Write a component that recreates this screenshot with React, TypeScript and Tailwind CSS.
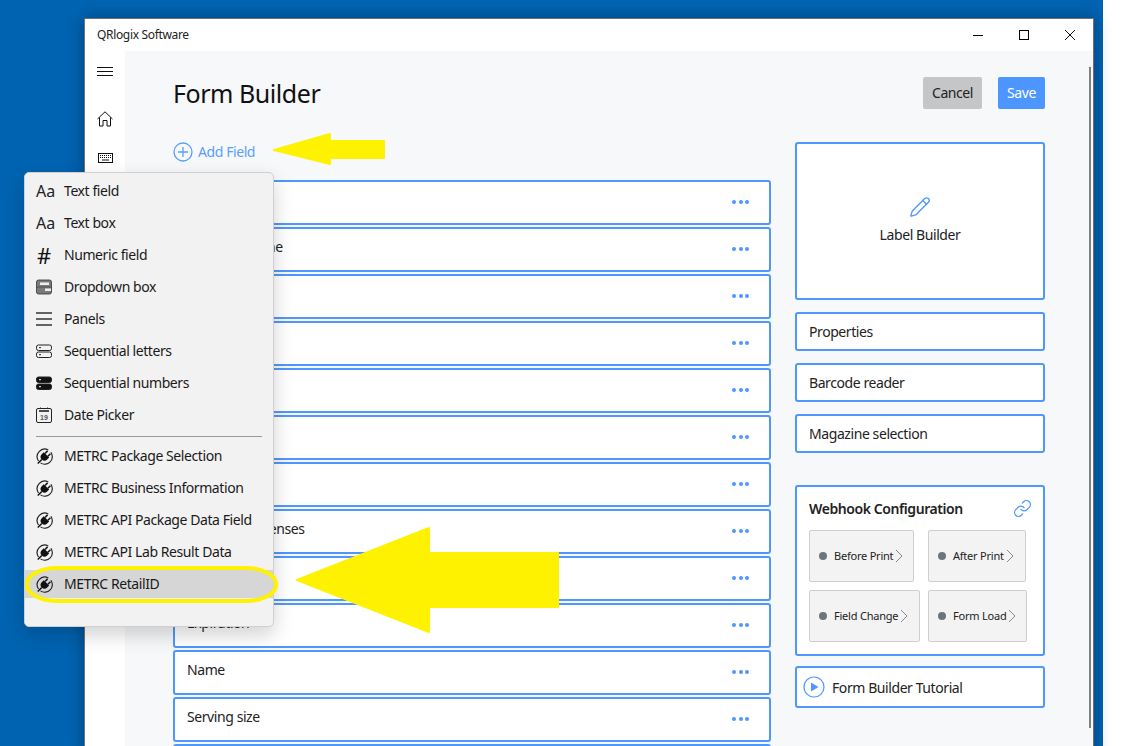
import { Link, Pencil } from 'lucide-react';

const font = 'font-["Noto_Sans","Open_Sans",sans-serif]';

// rows hidden behind the menu or below the fold keep an empty label
const fields = [
  '',
  'Business Name',
  '',
  '',
  '',
  '',
  '',
  "Producer's licenses",
  '',
  'Expiration',
  'Name',
  'Serving size',
  '',
];

function PlugIcon() {
  return (
    <svg width="17" height="17" viewBox="0 0 16 16" fill="none">
      <path d="M2.4 12.2A7.1 7.1 0 0 1 11.6 1.9" stroke="#222" strokeWidth="1.1" />
      <path d="M14 4A7.1 7.1 0 0 1 4.2 14" stroke="#222" strokeWidth="1.1" />
      <g transform="translate(8 8.3) rotate(45)">
        <path d="M-3.6 -2.6H3.6V0.4C3.6 2.4 2 3.6 0 3.6S-3.6 2.4 -3.6 0.4Z" fill="#111" />
        <path d="M-1.9 -2.6V-6M1.9 -2.6V-6M0 3.6V9" stroke="#111" strokeWidth="1.4" />
      </g>
    </svg>
  );
}

function DropdownIcon() {
  return (
    <svg width="16" height="16" viewBox="0 0 16 16">
      <rect x="0.5" y="1" width="15" height="14" rx="2" fill="#7a7a7a" stroke="#333" strokeWidth="0.8" />
      <rect x="4" y="3.5" width="9" height="2.5" fill="#eee" />
      <rect x="9" y="9.5" width="6" height="2.5" fill="#eee" />
      <path d="M0.5 8H15.5" stroke="#333" strokeWidth="0.6" />
    </svg>
  );
}

function PanelsIcon() {
  return (
    <svg width="16" height="16" viewBox="0 0 16 16" stroke="#333" strokeWidth="1.4">
      <path d="M0 2H16M0 8H16M0 14H16" />
    </svg>
  );
}

function LettersIcon({ solid }: { solid?: boolean }) {
  return (
    <svg width="16" height="16" viewBox="0 0 16 16">
      <rect x="0.5" y="2" width="15" height="5.5" rx="2" fill={solid ? '#111' : 'none'} stroke="#222" />
      <rect x="0.5" y="9" width="15" height="5.5" rx="2" fill={solid ? '#111' : 'none'} stroke="#222" />
      <path d="M3 4.7H5M3 11.7H5" stroke={solid ? '#fff' : '#222'} />
    </svg>
  );
}

function CalendarIcon() {
  return (
    <svg width="16" height="16" viewBox="0 0 16 16" fill="none">
      <rect x="0.5" y="1.5" width="15" height="14" rx="1.5" stroke="#222" />
      <path d="M3 4H13" stroke="#222" strokeWidth="1.6" />
      <path d="M4.5 0.5V2M11.5 0.5V2" stroke="#222" />
      <text x="8" y="13" textAnchor="middle" fontSize="7" fontWeight="700" fill="#555" fontFamily="Liberation Sans, sans-serif">
        19
      </text>
    </svg>
  );
}

function Glyph({ children }: { children: string }) {
  return <span className="text-[16px] leading-none text-[#222]">{children}</span>;
}

function MenuItem({
  icon,
  label,
  active,
}: {
  icon: React.ReactNode;
  label: string;
  active?: boolean;
}) {
  return (
    <div className={`flex h-[28px] items-center ${active ? 'bg-[#d6d6d6]' : ''}`}>
      <span className="flex w-[39px] shrink-0 justify-start pl-[11px]">{icon}</span>
      <span className="text-[14px] leading-none tracking-[-0.42px] text-[#1a1a1a]">{label}</span>
    </div>
  );
}

function FieldMenu() {
  return (
    <div className="absolute left-[24px] top-[172px] flex h-[455px] w-[250px] flex-col gap-[4px] rounded-[5px] border border-[#d0d0d0] bg-[#f2f2f2] pt-[4px] shadow-[0_8px_20px_rgba(0,0,0,0.18)]">
      <MenuItem icon={<Glyph>Aa</Glyph>} label="Text field" />
      <MenuItem icon={<Glyph>Aa</Glyph>} label="Text box" />
      <MenuItem icon={<span className="pl-[1px] text-[22px] leading-none text-[#111]">#</span>} label="Numeric field" />
      <MenuItem icon={<DropdownIcon />} label="Dropdown box" />
      <MenuItem icon={<PanelsIcon />} label="Panels" />
      <MenuItem icon={<LettersIcon />} label="Sequential letters" />
      <MenuItem icon={<LettersIcon solid />} label="Sequential numbers" />
      <MenuItem icon={<CalendarIcon />} label="Date Picker" />
      <div className="mx-[11px] mb-[1px] mt-[3px] h-px bg-[#999]" />
      <MenuItem icon={<PlugIcon />} label="METRC Package Selection" />
      <MenuItem icon={<PlugIcon />} label="METRC Business Information" />
      <MenuItem icon={<PlugIcon />} label="METRC API Package Data Field" />
      <MenuItem icon={<PlugIcon />} label="METRC API Lab Result Data" />
      <MenuItem icon={<PlugIcon />} label="METRC RetailID" active />
    </div>
  );
}

function FieldRow({ label }: { label: string }) {
  return (
    <div className="flex h-[45px] shrink-0 items-center justify-between rounded-[3px] border-2 border-[#4f97ff] bg-white pl-[12px] pr-[20px]">
      <span className="-mt-[6px] text-[14px] tracking-[-0.42px] text-[#222]">{label}</span>
      <span className="-mt-[2px] flex gap-[2.5px]">
        <i className="h-[4px] w-[4px] rounded-full bg-[#4f97ff]" />
        <i className="h-[4px] w-[4px] rounded-full bg-[#4f97ff]" />
        <i className="h-[4px] w-[4px] rounded-full bg-[#4f97ff]" />
      </span>
    </div>
  );
}

function SideCard({ label }: { label: string }) {
  return (
    <div className="flex h-[39px] items-center rounded-[3px] border-2 border-[#4f97ff] bg-white pl-[12px] text-[14px] tracking-[-0.42px] text-[#222]">
      {label}
    </div>
  );
}

function HookButton({ label, width }: { label: string; width: string }) {
  return (
    <div className={`flex h-[52px] items-center rounded-[2px] border border-[#cfcfcf] bg-[#f3f3f3] pl-[9px] ${width}`}>
      <i className="h-[8px] w-[8px] shrink-0 rounded-full bg-[#6c757d]" />
      <span className="ml-[7px] whitespace-nowrap text-[11px] tracking-[-0.22px] text-[#222]">{label}</span>
      <svg className="ml-[2px] shrink-0" width="8" height="14" viewBox="0 0 8 14" fill="none" stroke="#888">
        <path d="M1 1 7 7 1 13" />
      </svg>
    </div>
  );
}

export default function App() {
  return (
    <div className={`relative h-[746px] w-[1136px] overflow-hidden bg-white ${font}`}>
      <div className="h-full w-[1103px] bg-[#0063b1]" />

      <div className="absolute left-[84px] top-[18px] flex h-[740px] w-[1010px] flex-col border border-[#707070] bg-white shadow-[0_0_16px_rgba(0,0,0,0.32)]">
        <div className="flex h-[32px] shrink-0 items-center justify-between">
          <span className="pl-[12px] text-[12px] tracking-[-0.33px] text-[#222]">QRlogix Software</span>
          <div className="flex items-center">
            <span className="flex w-[46px] justify-center">
              <i className="h-px w-[10px] bg-black" />
            </span>
            <span className="flex w-[46px] justify-center">
              <i className="h-[10px] w-[10px] border border-black" />
            </span>
            <span className="flex w-[46px] justify-center">
              <svg width="10" height="10" viewBox="0 0 10 10" stroke="#111">
                <path d="M0 0 10 10M10 0 0 10" />
              </svg>
            </span>
          </div>
        </div>

        <div className="flex min-h-0 flex-1">
          <div className="flex w-[40px] shrink-0 flex-col items-center pt-[16px]">
            <svg width="16" height="9" viewBox="0 0 16 9" stroke="#111">
              <path d="M0 .5H16M0 4.5H16M0 8.5H16" />
            </svg>
            <svg className="mt-[35px]" width="16" height="16" viewBox="0 0 16 16" fill="none" stroke="#111">
              <path d="M.5 8 8 .8 15.5 8M2.5 6.5V15H6V9.5H10V15H13.5V6.5" />
            </svg>
            <svg className="mt-[26px]" width="15" height="10" viewBox="0 0 15 10" fill="none" stroke="#111">
              <rect x=".5" y=".5" width="14" height="9" />
              <path d="M2 2.5H13M2 4.5H13" strokeDasharray="1 1" />
              <path d="M4 7H11" />
            </svg>
          </div>

          <div className="relative min-w-0 flex-1 bg-[#f6f8fa] pl-[48px]">
            <div className="flex h-[91px] w-[872px] items-start justify-between">
              <h1 className="pt-[23px] text-[25px] font-normal leading-[38px] tracking-[-0.45px] text-[#111]">Form Builder</h1>
              <div className="flex gap-[16px] pt-[26px]">
                <span className="flex h-[32px] w-[59px] items-center justify-center rounded-[2px] bg-[#c5c6c8] pb-[1px] text-[14px] tracking-[-0.42px] text-[#222]">
                  Cancel
                </span>
                <span className="flex h-[32px] w-[47px] items-center justify-center rounded-[2px] bg-[#4d96ff] pb-[1px] text-[14px] tracking-[-0.42px] text-white">
                  Save
                </span>
              </div>
            </div>

            <div className="flex gap-[24px]">
              <div className="flex w-[598px] shrink-0 flex-col gap-[2px]">
                <div className="flex h-[36px] items-start gap-[5px] text-[14px] tracking-[-0.42px] text-[#5a9fff]">
                  <svg width="20" height="20" viewBox="0 0 20 20" fill="none" stroke="#5a9fff" strokeWidth="1.3">
                    <circle cx="10" cy="10" r="9" />
                    <path d="M10 5V15M5 10H15" />
                  </svg>
                  <span className="leading-[20px]">Add Field</span>
                </div>
                {fields.map((field, index) => (
                  <FieldRow key={index} label={field} />
                ))}
              </div>

              <div className="flex w-[250px] shrink-0 flex-col">
                <div className="flex h-[158px] flex-col items-center justify-center rounded-[3px] border-2 border-[#4f97ff] bg-white pb-[1px]">
                  <Pencil size={22} strokeWidth={1.5} className="text-[#4f97ff]" />
                  <span className="mt-[6px] text-[14px] tracking-[-0.42px] text-[#222]">Label Builder</span>
                </div>
                <div className="mt-[12px] flex flex-col gap-[12px]">
                  <SideCard label="Properties" />
                  <SideCard label="Barcode reader" />
                  <SideCard label="Magazine selection" />
                </div>
                <div className="mt-[32px] h-[171px] rounded-[3px] border-2 border-[#4f97ff] bg-white pl-[12px]">
                  <div className="flex h-[43px] items-center justify-between pr-[11px]">
                    <span className="text-[14px] font-semibold tracking-[-0.42px] text-[#222]">Webhook Configuration</span>
                    <Link size={19} strokeWidth={1.6} className="text-[#4f97ff]" />
                  </div>
                  <div className="flex flex-col gap-[8px]">
                    <div className="flex gap-[14px]">
                      <HookButton label="Before Print" width="w-[105px]" />
                      <HookButton label="After Print" width="w-[98px]" />
                    </div>
                    <div className="flex gap-[8px]">
                      <HookButton label="Field Change" width="w-[111px]" />
                      <HookButton label="Form Load" width="w-[99px]" />
                    </div>
                  </div>
                </div>
                <div className="mt-[10px] flex h-[42px] items-center gap-[7px] rounded-[3px] border-2 border-[#4f97ff] bg-white pl-[6px]">
                  <svg width="22" height="22" viewBox="0 0 22 22" fill="none">
                    <circle cx="11" cy="11" r="10" stroke="#4f97ff" strokeWidth="1.2" />
                    <path d="M8 6.5 15.5 11 8 15.5Z" fill="#4f97ff" />
                  </svg>
                  <span className="text-[14px] tracking-[-0.42px] text-[#222]">Form Builder Tutorial</span>
                </div>
              </div>
            </div>

            <div className="absolute right-[2px] top-[16px] h-[661px] w-[2px] bg-[#808080]" />
          </div>
        </div>
      </div>

      <FieldMenu />

      <svg className="pointer-events-none absolute left-0 top-0" width="1136" height="746" fill="#fff200" stroke="#fff200" strokeWidth="2" strokeLinejoin="round">
        <path d="M274 150 330 134V141H384V158H330V164Z" />
        <path d="M297 580 429 528V553H558V607H429V632Z" />
        <rect x="27" y="568" width="249" height="33" rx="30" ry="16" fill="none" strokeWidth="4" />
      </svg>
    </div>
  );
}
